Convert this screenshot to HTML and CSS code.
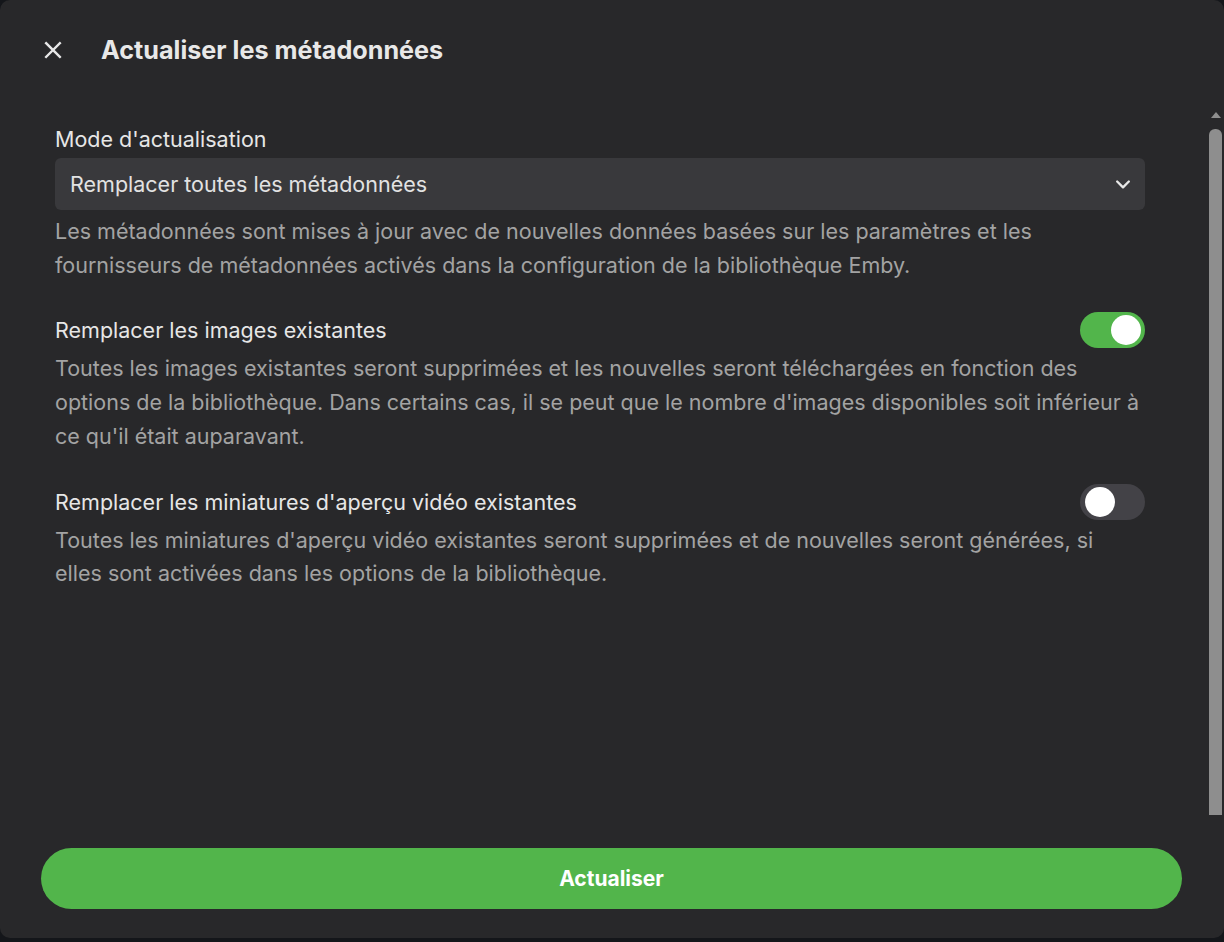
FILE: index.html
```html
<!DOCTYPE html>
<html lang="fr">
<head>
<meta charset="utf-8">
<title>Actualiser les métadonnées</title>
<link rel="stylesheet" href="styles.css">
</head>
<body>
<div class="dialog">
  <header class="dialog-header">
    <button class="close-btn" aria-label="Fermer">
      <svg width="22" height="22" viewBox="0 0 24 24"><path d="M4.5 4.5L19.5 19.5M19.5 4.5L4.5 19.5" stroke="#e8e8e8" stroke-width="2.6" stroke-linecap="square" fill="none"/></svg>
    </button>
    <h1 class="dialog-title">Actualiser les métadonnées</h1>
  </header>
  <div class="dialog-body">
    <div class="field">
      <label class="field-label">Mode d'actualisation</label>
      <div class="select">
        <span class="select-value">Remplacer toutes les métadonnées</span>
        <svg class="chevron" width="20" height="20" viewBox="0 0 24 24"><path d="M5 9l7 7 7-7" stroke="#e8e8e8" stroke-width="2.8" fill="none" stroke-linecap="round" stroke-linejoin="round"/></svg>
      </div>
      <p class="field-desc">Les métadonnées sont mises à jour avec de nouvelles données basées sur les paramètres et les fournisseurs de métadonnées activés dans la configuration de la bibliothèque Emby.</p>
    </div>
    <div class="field">
      <div class="toggle-row">
        <span class="toggle-label">Remplacer les images existantes</span>
        <span class="toggle on"><span class="knob"></span></span>
      </div>
      <p class="field-desc">Toutes les images existantes seront supprimées et les nouvelles seront téléchargées en fonction des options de la bibliothèque. Dans certains cas, il se peut que le nombre d'images disponibles soit inférieur à ce qu'il était auparavant.</p>
    </div>
    <div class="field">
      <div class="toggle-row">
        <span class="toggle-label">Remplacer les miniatures d'aperçu vidéo existantes</span>
        <span class="toggle"><span class="knob"></span></span>
      </div>
      <p class="field-desc">Toutes les miniatures d'aperçu vidéo existantes seront supprimées et de nouvelles seront générées, si elles sont activées dans les options de la bibliothèque.</p>
    </div>
    <div class="scrollbar"><span class="scroll-arrow"></span><span class="scroll-thumb"></span></div>
  </div>
  <footer class="dialog-footer">
    <button class="primary-btn">Actualiser</button>
  </footer>
</div>
</body>
</html>
```
FILE: styles.css
```css
* { box-sizing: border-box; }
html, body { margin: 0; height: 100%; }
body {
  background: #14161a;
  font-family: Inter, "Noto Sans", sans-serif;
  overflow: hidden;
}
.dialog {
  height: 938px;
  background: #28282a;
  border-radius: 10px;
  display: flex;
  flex-direction: column;
  color: #e6e6e6;
}
.dialog-header {
  display: flex;
  align-items: center;
  height: 100px;
  padding: 0 0 0 42px;
}
.close-btn {
  background: none;
  border: 0;
  padding: 0;
  width: 22px;
  height: 22px;
  display: flex;
  margin-right: 37px;
}
.dialog-title {
  margin: 0;
  font-size: 25.2px;
  font-weight: 700;
  color: #e8e8e8;
  letter-spacing: 0;
}
.dialog-body {
  position: relative;
  flex: 1;
  padding: 22px 79px 0 55px;
}
.field { margin-bottom: 30px; }
.field-label {
  display: block;
  font-size: 21.5px;
  color: #e6e6e6;
  line-height: 34px;
  margin-bottom: 2px;
}
.select {
  height: 52px;
  background: #39393c;
  border-radius: 6px;
  display: flex;
  align-items: center;
  justify-content: space-between;
  padding: 0 12px 0 15px;
  font-size: 21.5px;
  color: #e2e2e2;
}
.chevron { display: block; }
.field-desc {
  margin: 0;
  font-size: 21.5px;
  line-height: 33.7px;
  color: #a3a3a3;
}
.select + .field-desc { margin-top: 5px; }
.toggle-row {
  display: flex;
  align-items: center;
  justify-content: space-between;
  height: 36px;
  margin-bottom: 4px;
}
.toggle-label {
  font-size: 21.5px;
  color: #e6e6e6;
}
.toggle {
  width: 65px;
  height: 36px;
  border-radius: 18px;
  background: #434247;
  display: flex;
  align-items: center;
  padding: 0 5px;
}
.toggle.on {
  background: #52b54b;
  justify-content: flex-end;
  padding: 0 4px;
}
.knob {
  width: 30px;
  height: 30px;
  border-radius: 50%;
  background: #ffffff;
}
.scrollbar {
  position: absolute;
  right: 2px;
  top: 12px;
  bottom: 0;
  width: 13px;
  display: flex;
  flex-direction: column;
  align-items: center;
}
.scroll-arrow {
  width: 0;
  height: 0;
  border-left: 5px solid transparent;
  border-right: 5px solid transparent;
  border-bottom: 6px solid #8f8f8f;
  margin-bottom: 11px;
}
.scroll-thumb {
  width: 13px;
  height: 686px;
  background: #8e8e8e;
  border-radius: 6px 6px 0 0;
}
.dialog-footer {
  padding: 18px 42px 29px 41px;
}
.primary-btn {
  display: block;
  width: 100%;
  height: 61px;
  border: 0;
  border-radius: 31px;
  background: #52b54b;
  color: #ffffff;
  font-family: Inter, "Noto Sans", sans-serif;
  font-size: 21px;
  font-weight: 700;
}
```
